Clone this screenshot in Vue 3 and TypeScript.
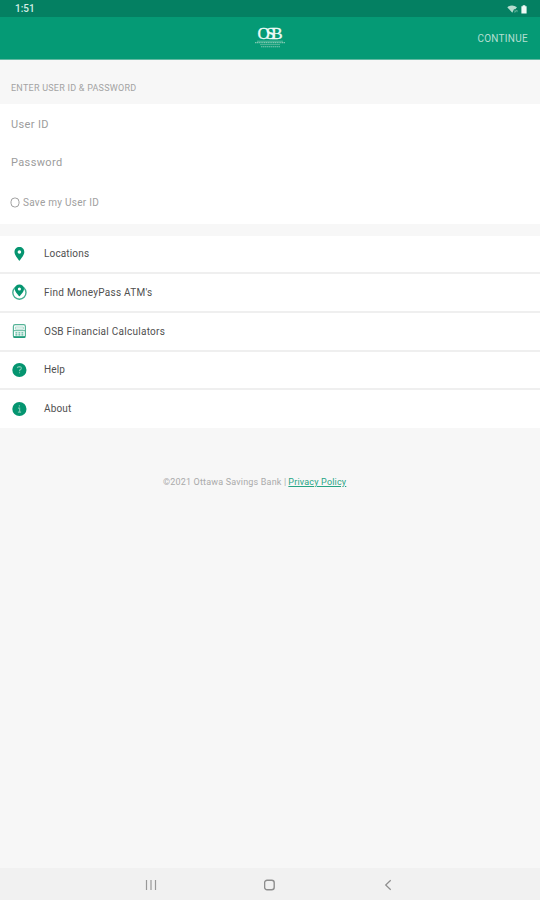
<script setup lang="ts">
type IconName = 'pin' | 'atm' | 'calculator' | 'help' | 'about'

interface MenuItem {
  label: string
  icon: IconName
}

const menu: MenuItem[] = [
  { label: 'Locations', icon: 'pin' },
  { label: "Find MoneyPass ATM's", icon: 'atm' },
  { label: 'OSB Financial Calculators', icon: 'calculator' },
  { label: 'Help', icon: 'help' },
  { label: 'About', icon: 'about' },
]
</script>

<template>
  <div class="screen">
    <div class="status">
      <span class="clock">1:51</span>
      <span class="status-icons">
        <svg class="wifi" width="12" height="9" viewBox="0 0 12 9">
          <path d="M0.3 2.2Q5 -1.4 10 2.2L8.3 4.3L7 4.2L5.3 7.7Z" fill="#b5dccf" />
          <path d="M7.5 7.2L9.8 5.2M8 5.2V7.5M10 5V7.2" stroke="#6fb9a1" stroke-width="0.8" fill="none" />
        </svg>
        <svg width="6" height="9" viewBox="0 0 6 9">
          <path d="M1.7 0.3H4.3V1.2H5.6V8.5H0.4V1.2H1.7Z" fill="#effaf6" />
        </svg>
      </span>
    </div>

    <header class="bar">
      <span></span>
      <div class="logo">
        <span class="logo-name">OSB</span>
        <svg class="logo-lines" width="32" height="9" viewBox="0 0 32 9">
          <path d="M3 1.2H29" stroke="#7fc8b1" stroke-width="0.7" />
          <path d="M1 2.6H31" stroke="#7fc8b1" stroke-width="1.1" stroke-dasharray="1.3 0.5" />
          <path d="M6 4.6H26" stroke="#55b698" stroke-width="1" />
          <path d="M7 6.7H26" stroke="#7fc8b1" stroke-width="1.1" stroke-dasharray="1.5 0.5" />
        </svg>
      </div>
      <span class="continue">CONTINUE</span>
    </header>

    <h2 class="heading">ENTER USER ID &amp; PASSWORD</h2>

    <section class="form">
      <div class="field">User ID</div>
      <div class="field">Password</div>
      <div class="save">
        <svg width="10" height="11" viewBox="0 0 10 11">
          <rect x="1" y="1" width="8" height="9" rx="3.7" fill="none" stroke="#a0a0a0" />
        </svg>
        <span>Save my User ID</span>
      </div>
    </section>

    <nav class="menu">
      <div v-for="item in menu" :key="item.icon" class="row">
        <svg class="icon" width="16" height="16" viewBox="-0.4 0 16 16">
          <path
            v-if="item.icon === 'pin'"
            d="M8 1.1C5.1 1.1 3.1 3.2 3.1 6C3.1 9.3 8 14.8 8 14.8S12.9 9.3 12.9 6C12.9 3.2 10.9 1.1 8 1.1ZM8 4.2A1.8 1.8 0 1 1 8 7.8A1.8 1.8 0 0 1 8 4.2Z"
            fill="#059570"
            fill-rule="evenodd"
          />
          <template v-else-if="item.icon === 'atm'">
            <circle cx="8" cy="8.6" r="6.6" fill="#fff" stroke="#43ae91" stroke-width="1.4" />
            <path
              d="M8 0.4C5.4 0.4 3.4 2.2 3.4 4.9C3.4 7.9 8 12.3 8 12.3S12.6 7.9 12.6 4.9C12.6 2.2 10.6 0.4 8 0.4ZM8 3.4A1.6 1.6 0 1 1 8 6.6A1.6 1.6 0 0 1 8 3.4Z"
              fill="#059570"
              fill-rule="evenodd"
            />
          </template>
          <template v-else-if="item.icon === 'calculator'">
            <rect x="2" y="1.7" width="12" height="12.8" rx="1.8" fill="#fff" stroke="#55b397" stroke-width="1.2" />
            <path d="M4 4H12V6.2H4Z" fill="#f5fcfa" stroke="#7cc4ae" stroke-width="0.6" />
            <path d="M2 7.7H14" stroke="#55b397" />
            <path d="M4 9.8H12M4 11.8H12" stroke="#4db296" stroke-width="1.2" stroke-dasharray="2 1" />
            <path d="M2.2 14H13.8" stroke="#129773" stroke-width="1.6" />
          </template>
          <template v-else>
            <circle cx="8" cy="8" r="7.1" fill="#059570" />
            <path
              v-if="item.icon === 'help'"
              d="M5.9 6Q6.2 4.7 8 4.7Q10.1 4.8 9.9 6.4Q9.7 7.5 8.2 8.2V9.3M8.1 10.2V11.3"
              fill="none"
              stroke="#7cc7b1"
              stroke-width="1.2"
            />
            <path
              v-else
              d="M8 4.3V5.6M6.6 7.2H8.2V11M6.5 11.1H9.7"
              fill="none"
              stroke="#7cc7b1"
              stroke-width="1.2"
            />
          </template>
        </svg>
        <span :class="['label', item.icon]">{{ item.label }}</span>
      </div>
    </nav>

    <footer class="legal">
      <span>©2021 Ottawa Savings Bank |</span>
      <a class="privacy">Privacy Policy</a>
    </footer>

    <div class="system-nav">
      <svg width="12" height="12" viewBox="0 0 12 12">
        <path d="M1.5 1V11M6 1V11M10.5 1V11" stroke="#999" stroke-width="1.2" />
      </svg>
      <svg width="12" height="12" viewBox="0.6 0 12 12">
        <rect x="1.2" y="1.2" width="9.6" height="9.6" rx="2.5" fill="none" stroke="#8e8e8e" stroke-width="1.4" />
      </svg>
      <svg width="12" height="12" viewBox="0 0 12 12">
        <path d="M8.7 1.2L3.7 6L8.7 10.8" fill="none" stroke="#8e8e8e" stroke-width="1.2" />
      </svg>
    </div>
  </div>
</template>

<style>
body {
  margin: 0;
}
</style>

<style scoped>
.screen {
  display: flex;
  flex-direction: column;
  width: 540px;
  height: 900px;
  overflow: hidden;
  box-sizing: border-box;
  background: #f7f7f7;
  font-family: Roboto, 'Liberation Sans', sans-serif;
  white-space: nowrap;
}
.status {
  display: flex;
  flex: none;
  justify-content: space-between;
  align-items: center;
  height: 17px;
  padding: 1px 13px 0 15px;
  box-sizing: border-box;
  background: #048062;
}
.clock {
  color: #d5eee6;
  font-size: 10px;
  font-weight: 500;
  line-height: 16px;
}
.status-icons {
  display: flex;
  gap: 2px;
}
.bar {
  display: grid;
  flex: none;
  grid-template-columns: 1fr 32px 1fr;
  align-items: center;
  height: 43px;
  padding-right: 12px;
  padding-left: 12px;
  box-sizing: border-box;
  background: #059a75;
  border-bottom: 1px solid #64b9a2;
}
.logo {
  display: flex;
  flex-direction: column;
  align-items: center;
  height: 24px;
}
.logo-name {
  height: 14px;
  color: #effaf6;
  font-family: 'Liberation Serif', serif;
  font-size: 17px;
  line-height: 16px;
  letter-spacing: -4px;
  margin-left: -4px;
  -webkit-text-stroke: 0.3px #effaf6;
}
.logo-lines {
  flex: none;
}
.continue {
  justify-self: end;
  padding-top: 2px;
  color: #b4dfd2;
  font-size: 10px;
  line-height: 14px;
  letter-spacing: 0.28px;
}
.heading {
  flex: none;
  height: 44px;
  margin: 0;
  padding: 21px 0 0 11px;
  box-sizing: border-box;
  color: #a3a3a3;
  font-size: 9px;
  font-weight: 400;
  line-height: 14px;
  letter-spacing: 0.25px;
}
.form {
  display: grid;
  flex: none;
  grid-template-rows: 39px 38px 43px;
  height: 120px;
  background: #fff;
}
.field {
  display: flex;
  align-items: center;
  padding: 1px 0 0 11px;
  color: #9c9c9c;
  font-size: 11px;
  letter-spacing: 0.37px;
}
.save {
  display: flex;
  align-items: center;
  gap: 3px;
  padding-left: 10px;
  color: #a0a0a0;
  font-size: 10px;
  letter-spacing: 0.27px;
}
.menu {
  display: grid;
  flex: none;
  grid-template-rows: 38px 39px 39px 38px 38px;
  height: 192px;
  margin-top: 12px;
  background: #fff;
}
.row {
  display: flex;
  align-items: center;
  gap: 17px;
  padding: 0 12px 1px 11px;
  box-sizing: border-box;
  color: #505050;
  font-size: 10px;
  letter-spacing: 0.27px;
}
.row:not(:last-child) {
  border-bottom: 2px solid #efefef;
}
.label.pin,
.label.help,
.label.about {
  letter-spacing: 0.15px;
}
.icon {
  flex: none;
}
.legal {
  display: flex;
  flex: none;
  gap: 2px;
  padding: 47px 0 0 163px;
  color: #aaa;
  font-size: 9px;
  line-height: 14px;
  letter-spacing: 0.18px;
}
.privacy {
  color: #28a584;
  text-decoration: underline;
}
.system-nav {
  display: flex;
  flex: none;
  justify-content: space-between;
  align-items: center;
  height: 32px;
  margin-top: auto;
  padding: 2px 146px 0 145px;
  box-sizing: border-box;
  background: #f1f1f1;
}
</style>
